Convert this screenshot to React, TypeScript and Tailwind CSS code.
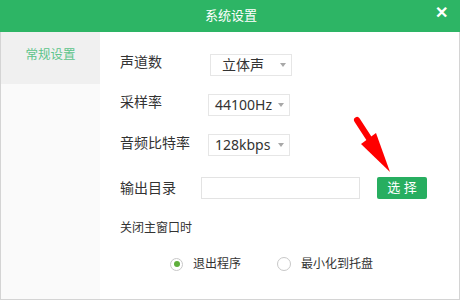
import React from "react";

const font = { fontFamily: '"Noto Sans", "Noto Sans CJK SC", sans-serif' };

function Caret() {
  return (
    <svg width="6" height="4" viewBox="0 0 6 4" className="shrink-0">
      <polygon points="0,0 6,0 3,4" fill="#a8a8a8" />
    </svg>
  );
}

function Select({ value, ml, pl }: { value: string; ml: string; pl: string }) {
  return (
    <div
      className={`${ml} ${pl} flex h-[22px] w-[82px] items-center justify-between border border-[#e6e6e6] pr-[5px] text-[14px] text-[#333]`}
    >
      <span className="leading-none">{value}</span>
      <Caret />
    </div>
  );
}

export default function App() {
  return (
    <div className="relative flex h-[300px] w-[460px] flex-col bg-white" style={font}>
      <div className="relative flex h-[32px] shrink-0 items-center justify-center bg-[#2db565]">
        <span className="pl-[2px] text-[13px] text-white">系统设置</span>
        <span className="absolute right-[12px] top-[3px] text-[16px] font-bold leading-[18px] text-white">✕</span>
      </div>
      <div className="flex flex-1 border-x border-b border-[#d4d4d4]">
        <div className="w-[99px] shrink-0 bg-[#fafafa]">
          <div className="flex h-[52px] justify-center bg-[#f0f0f0] pt-[13px] text-[12.5px] leading-[20px] text-[#5cc48a]">
            常规设置
          </div>
        </div>
        <div className="flex flex-1 flex-col pl-[20px] pt-[22px] text-[#333]">
          <div className="flex h-[22px] items-center">
            <span className="mb-[6px] w-[42px] text-[14px] leading-none">声道数</span>
            <Select value="立体声" ml="ml-[48px]" pl="pl-[11px]" />
          </div>
          <div className="mt-[18px] flex h-[22px] items-center">
            <span className="mb-[6px] w-[42px] text-[14px] leading-none">采样率</span>
            <Select value="44100Hz" ml="ml-[46px]" pl="pl-[6px]" />
          </div>
          <div className="mt-[18px] flex h-[22px] items-center">
            <span className="mb-[4px] w-[70px] text-[14px] leading-none">音频比特率</span>
            <Select value="128kbps" ml="ml-[18px]" pl="pl-[6px]" />
          </div>
          <div className="mt-[21px] flex h-[22px] items-center">
            <span className="w-[56px] text-[14px] leading-none">输出目录</span>
            <div className="ml-[25px] h-[22px] w-[159px] border border-[#e3e3e3]" />
            <div className="ml-[17px] flex h-[22px] w-[50px] items-center justify-center rounded-[2px] bg-[#27ae60] text-[13px] text-white">
              选 择
            </div>
          </div>
          <div className="mt-[19px] text-[12px] leading-[20px]">关闭主窗口时</div>
          <div className="mt-[16px] flex h-[20px] items-center pl-[50px] text-[12px]">
            <span className="flex h-[13px] w-[13px] items-center justify-center rounded-full border border-[#c8c8c8] bg-white">
              <span className="h-[6px] w-[6px] rounded-full bg-[#5faf3c]" />
            </span>
            <span className="ml-[10px]">退出程序</span>
            <span className="ml-[36px] h-[14px] w-[14px] rounded-full border border-[#c8c8c8] bg-white" />
            <span className="ml-[10px]">最小化到托盘</span>
          </div>
        </div>
      </div>
      <svg className="absolute left-[345px] top-[110px]" width="55" height="65" viewBox="0 0 55 65">
        <line x1="12" y1="10" x2="25" y2="30" stroke="#ff0000" strokeWidth="6" strokeLinecap="round" />
        <polygon points="31,23 16,34 45,62" fill="#ff0000" />
      </svg>
    </div>
  );
}
